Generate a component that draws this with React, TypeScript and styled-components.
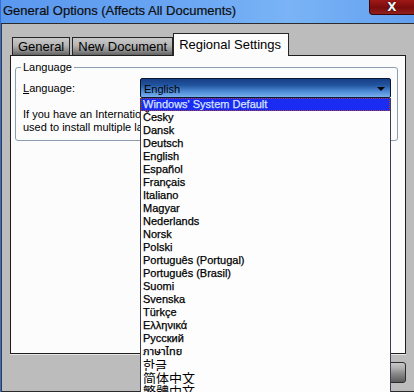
import React from "react";
import styled, { createGlobalStyle } from "styled-components";

const Global = createGlobalStyle`
  html, body { margin: 0; padding: 0; background: #bcbcbc; }
  body { overflow: hidden; }
`;

const Root = styled.div`
  position: relative;
  width: 414px;
  height: 392px;
  overflow: hidden;
  display: flex;
  flex-direction: column;
  box-sizing: border-box;
  border-left: 1px solid #2f6fd6;
  font-family: "Liberation Sans", Arial, sans-serif;
  color: #000;
`;

const TitleBar = styled.div`
  height: 23px;
  flex: none;
  display: flex;
  align-items: flex-start;
  border-bottom: 1px solid #2b2b2b;
  background: linear-gradient(to right, #5a98ef 0%, #6aa6f3 45%, #7ab4f6 70%, #629fef 100%);
`;

const Title = styled.div`
  padding: 3px 0 0 2px;
  font-size: 13px;
  line-height: 15px;
  color: #0e0e0e;
  white-space: nowrap;
  -webkit-text-stroke: 0.2px #0e0e0e;
`;

const CloseButton = styled.div`
  margin-left: auto;
  width: 45px;
  height: 15px;
  box-sizing: border-box;
  border: 1px solid #3a0606;
  border-top: none;
  border-right: none;
  border-bottom-left-radius: 4px;
  background: linear-gradient(#a01818, #7a0c0c 55%, #94201c);
  display: flex;
  align-items: center;
  justify-content: center;
  font-family: "DejaVu Sans", sans-serif;
  font-weight: bold;
  font-size: 12px;
  line-height: 12px;
  color: #f4f4f4;
  text-shadow: 0 0 1px #000, 0 0 1px #000;
`;

const Body = styled.div`
  flex: 1;
  display: flex;
  flex-direction: column;
  border-left: 1px solid #3a3a3a;
  border-bottom: 1px solid #2a2a2a;
  padding: 9px 8px 0 8px;
  background: #bcbcbc;
`;

const TabStrip = styled.div`
  display: flex;
  align-items: flex-end;
  gap: 2px;
  height: 22px;
  padding-left: 2px;
`;

const Tab = styled.div<{ $active?: boolean }>`
  box-sizing: border-box;
  height: ${(p) => (p.$active ? "23px" : "18px")};
  margin-bottom: ${(p) => (p.$active ? "-1px" : "0")};
  margin-left: ${(p) => (p.$active ? "-2px" : "0")};
  position: relative;
  z-index: ${(p) => (p.$active ? 1 : 0)};
  border: 1px solid #262626;
  border-bottom: none;
  padding: ${(p) => (p.$active ? "3px 7px 0 5px" : "1px 5px 0 5px")};
  font-size: 13px;
  line-height: 15px;
  white-space: nowrap;
  background: ${(p) =>
    p.$active
      ? "#fcfcfc"
      : "linear-gradient(#c9c9c9 0%, #b4b4b4 45%, #8c8c8c 75%, #626262 100%)"};
`;

const Panel = styled.div`
  width: 396px;
  height: 299px;
  box-sizing: border-box;
  border: 1px solid #1e1e1e;
  background: #fcfcfc;
  padding: 5px 7px 0 4px;
  box-shadow: 0 1px 0 #e8e8e8;
`;

const Group = styled.fieldset`
  margin: 0;
  box-sizing: border-box;
  width: 383px;
  height: 80px;
  border: 1px solid #8c9db2;
  border-radius: 3px;
  padding: 0 6px 0 7px;
  font-size: 11px;
`;

const Legend = styled.legend`
  padding: 0 2px;
  margin-left: -2px;
  font-size: 11px;
  line-height: 13px;
`;

const FieldRow = styled.div`
  display: flex;
  align-items: center;
  margin-top: 4px;
`;

const Label = styled.label`
  width: 117px;
  flex: none;
  font-size: 11px;
  line-height: 13px;
`;

const ComboWrap = styled.div`
  position: relative;
  width: 251px;
  z-index: 5;
`;

const Combo = styled.div`
  box-sizing: border-box;
  height: 20px;
  border: 1px solid #0b1630;
  border-radius: 2px;
  background: linear-gradient(#173e86 0%, #22559f 35%, #4f8bd6 70%, #78b0ee 100%);
  display: flex;
  align-items: center;
  padding: 1px 5px 0 3px;
  font-size: 11px;
  color: #000;
`;

const Arrow = styled.span`
  margin-left: auto;
  width: 0;
  height: 0;
  border-left: 4px solid transparent;
  border-right: 4px solid transparent;
  border-top: 4px solid #050505;
`;

const DropList = styled.ul`
  position: absolute;
  left: 0;
  top: 100%;
  width: 100%;
  box-sizing: border-box;
  margin: 0;
  padding: 0;
  list-style: none;
  background: #fdfdfd;
  border-left: 1px solid #3e3e52;
  border-right: 1px solid #3e3e52;
  height: 320px;
`;

const Item = styled.li<{ $selected?: boolean; $cjk?: boolean }>`
  box-sizing: border-box;
  height: 13px;
  padding-left: 2px;
  font-size: ${(p) => (p.$cjk ? "13px" : "11px")};
  line-height: 13px;
  white-space: nowrap;
  overflow: hidden;
  font-family: ${(p) =>
    p.$cjk
      ? `"Noto Sans CJK KR", "Noto Sans CJK SC", sans-serif`
      : `"Liberation Sans", "Noto Sans", "DejaVu Sans", "Noto Sans Thai", sans-serif`};
  font-weight: 400;
  color: ${(p) => (p.$selected ? "#d6e2ff" : "#000")};
  background: ${(p) => (p.$selected ? "#1a2bf2" : "transparent")};
  outline: ${(p) => (p.$selected ? "1px dotted #b03a3a" : "none")};
  outline-offset: -1px;
  -webkit-text-stroke: ${(p) => (p.$cjk ? "0" : "0.25px")};
`;

const Note = styled.p`
  margin: 10px 0 0 0;
  font-size: 11px;
  line-height: 12.5px;
  white-space: nowrap;
`;

const ButtonRow = styled.div`
  display: flex;
  justify-content: flex-end;
  gap: 6px;
  margin-top: 8px;
`;

const DlgButton = styled.div`
  box-sizing: border-box;
  width: 75px;
  height: 21px;
  border: 1px solid #2c2c2c;
  border-radius: 3px;
  background: linear-gradient(#c8c8c8 0%, #adadad 30%, #8a8a8a 55%, #5c5c5c 100%);
  font-size: 11px;
  display: flex;
  align-items: center;
  justify-content: center;
`;

const languages: { name: string; cjk?: boolean }[] = [
  { name: "Windows' System Default" },
  { name: "Česky" },
  { name: "Dansk" },
  { name: "Deutsch" },
  { name: "English" },
  { name: "Español" },
  { name: "Français" },
  { name: "Italiano" },
  { name: "Magyar" },
  { name: "Nederlands" },
  { name: "Norsk" },
  { name: "Polski" },
  { name: "Português (Portugal)" },
  { name: "Português (Brasil)" },
  { name: "Suomi" },
  { name: "Svenska" },
  { name: "Türkçe" },
  { name: "Ελληνικά" },
  { name: "Русский" },
  { name: "ภาษาไทย" },
  { name: "한글", cjk: true },
  { name: "简体中文", cjk: true },
  { name: "繁體中文", cjk: true },
];

export default function App() {
  return (
    <>
      <Global />
      <Root>
        <TitleBar>
          <Title>General Options (Affects All Documents)</Title>
          <CloseButton>X</CloseButton>
        </TitleBar>
        <Body>
          <TabStrip>
            <Tab>General</Tab>
            <Tab>New Document</Tab>
            <Tab $active>Regional Settings</Tab>
          </TabStrip>
          <Panel>
            <Group>
              <Legend>Language</Legend>
              <FieldRow>
                <Label>
                  <u>L</u>anguage:
                </Label>
                <ComboWrap>
                  <Combo>
                    English
                    <Arrow />
                  </Combo>
                  <DropList>
                    {languages.map((l, i) => (
                      <Item key={l.name} $selected={i === 0} $cjk={l.cjk}>
                        {l.name}
                      </Item>
                    ))}
                  </DropList>
                </ComboWrap>
              </FieldRow>
              <Note>
                If you have an International version of Windows installed,
                <br />
                used to install multiple languages, choose one here.
              </Note>
            </Group>
          </Panel>
          <ButtonRow>
            <DlgButton>OK</DlgButton>
            <DlgButton>Cancel</DlgButton>
          </ButtonRow>
        </Body>
      </Root>
    </>
  );
}
